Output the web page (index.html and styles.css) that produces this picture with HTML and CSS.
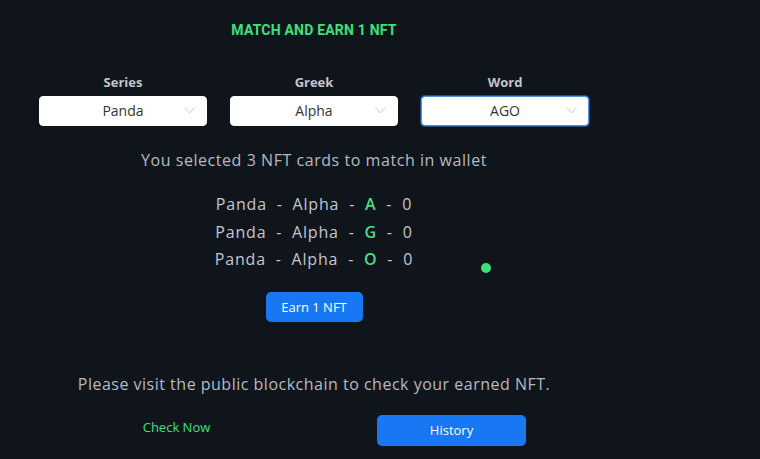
FILE: index.html
```html
<!DOCTYPE html>
<html lang="en">
<head>
  <meta charset="UTF-8" />
  <meta name="viewport" content="width=device-width, initial-scale=1" />
  <title>Match and Earn</title>
  <link rel="stylesheet" href="styles.css">
</head>
<body>
  <main class="main">
    <h1 class="title">MATCH AND EARN 1 NFT</h1>

    <div class="selects">
      <div class="field">
        <label>Series</label>
        <div class="select">Panda
          <svg class="chev" width="11" height="7" viewBox="0 0 11 7"><path d="M0.5 0.5 L5.5 6 L10.5 0.5" fill="none" stroke="#c9c9c9" stroke-width="1"/></svg>
        </div>
      </div>
      <div class="field">
        <label>Greek</label>
        <div class="select">Alpha
          <svg class="chev" width="11" height="7" viewBox="0 0 11 7"><path d="M0.5 0.5 L5.5 6 L10.5 0.5" fill="none" stroke="#c9c9c9" stroke-width="1"/></svg>
        </div>
      </div>
      <div class="field">
        <label>Word</label>
        <div class="select focused">AGO
          <svg class="chev" width="11" height="7" viewBox="0 0 11 7"><path d="M0.5 0.5 L5.5 6 L10.5 0.5" fill="none" stroke="#c9c9c9" stroke-width="1"/></svg>
        </div>
      </div>
    </div>

    <p class="info">You selected 3 NFT cards to match in wallet</p>

    <div class="cards">
      <div class="card-row">Panda&nbsp; - &nbsp;Alpha&nbsp; - &nbsp;<b>A</b>&nbsp; - &nbsp;0</div>
      <div class="card-row">Panda&nbsp; - &nbsp;Alpha&nbsp; - &nbsp;<b>G</b>&nbsp; - &nbsp;0</div>
      <div class="card-row">Panda&nbsp; - &nbsp;Alpha&nbsp; - &nbsp;<b>O</b>&nbsp; - &nbsp;0</div>
      <span class="dot"></span>
    </div>

    <button class="btn earn">Earn 1 NFT</button>

    <p class="info visit">Please visit the public blockchain to check your earned NFT.</p>

    <div class="actions">
      <div class="col"><a class="check" href="#">Check Now</a></div>
      <div class="col"><button class="btn history">History</button></div>
    </div>
  </main>
</body>
</html>
```

FILE: styles.css
```css
body { margin: 0; background: #10151c; font-family: "Open Sans", sans-serif; }
.main { width: 628px; text-align: center; padding-top: 20px; }

.title {
  margin: 0; font-family: Roboto, sans-serif; font-weight: 700;
  font-size: 14px; line-height: 20px; color: #3ee07b; letter-spacing: 0.2px;
}

.selects {
  display: grid; grid-template-columns: repeat(3, 1fr); gap: 23px;
  padding: 0 39px; margin-top: 34px;
}
.field label {
  display: block; font-family: "Open Sans", sans-serif; font-weight: 700;
  font-size: 13px; line-height: 16px; color: #c3c6cc; margin-bottom: 6px;
}
.select {
  position: relative; height: 30px; box-sizing: border-box;
  background: #fff; border-radius: 4px; border: 1px solid #fff;
  font-size: 14px; line-height: 28px; color: #333;
}
.select.focused { border-color: #4a90e2; box-shadow: 0 0 0 1px #1d4f8a; }
.chev { position: absolute; right: 11px; top: 10px; }

.info {
  margin: 22px 0 0; font-size: 16px; line-height: 24px; color: #b6bac2;
  letter-spacing: 0.55px;
}

.cards { position: relative; margin-top: 19px; }
.card-row { font-size: 16px; line-height: 27.5px; color: #c3c6cc; letter-spacing: 0.8px; }
.card-row b { color: #4ade80; font-weight: 600; }
.dot {
  position: absolute; left: 481px; top: 72px;
  width: 10px; height: 10px; border-radius: 50%; background: #3ee07b;
}

.btn {
  background: #1877f2; color: #fff; border: none; border-radius: 5px;
  font-family: "Open Sans", sans-serif; font-size: 13px; cursor: pointer;
}
.earn { width: 97px; height: 30px; margin-top: 18px; }

.visit { margin-top: 50px; letter-spacing: 0.5px; }

.actions { display: flex; padding: 0 39px; margin-top: 19px; }
.col { flex: 1; display: flex; justify-content: center; }
.check {
  color: #3ee07b; text-decoration: none; font-size: 13px; line-height: 24px;
}
.history { width: 149px; height: 31px; }
```
